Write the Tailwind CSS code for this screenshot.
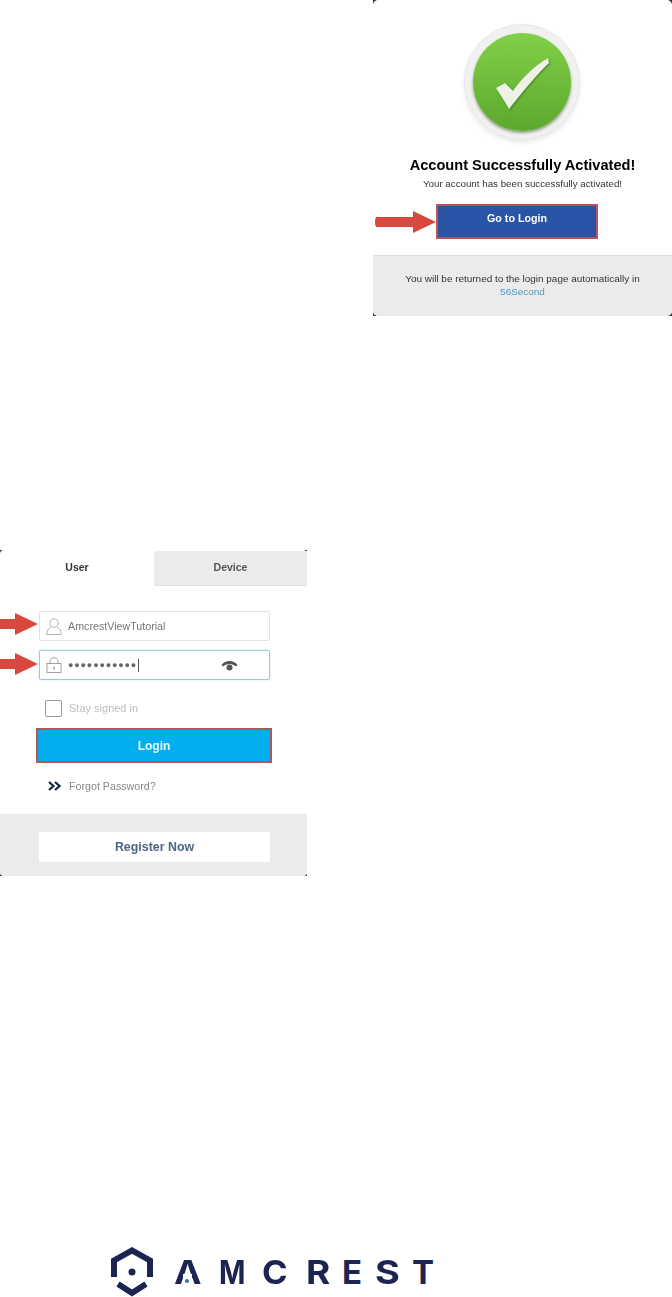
<!DOCTYPE html>
<html lang="en">

<head>
  <meta charset="UTF-8">
  <meta name="viewport" content="width=device-width, initial-scale=1.0">
  <title>Amcrest account activation</title>
  <script src="https://cdn.jsdelivr.net/npm/@tailwindcss/browser@4"></script>
</head>

<body class="bg-white">
  <div class="w-[672px] h-[1297px] overflow-hidden flex flex-col font-['Liberation_Sans',Arial,sans-serif]">

    <!-- activated card -->
    <div class="self-end w-[299px] h-[316px] bg-[#17324a] relative blur-[0.4px]">
      <div class="h-full bg-white rounded-[5px] flex flex-col items-center">
        <!-- check badge -->
        <div class="mt-[24px] -ml-[1px] w-[116px] h-[116px] rounded-full bg-[#f1f2f0] border border-[#e6e7ee] shadow-[0_3px_5px_rgba(0,0,0,0.08)] flex items-center justify-center">
          <div class="w-[98px] h-[98px] rounded-full bg-gradient-to-b from-[#82d048] to-[#5ba82e] shadow-[0_2px_3px_rgba(40,70,20,0.5)] flex items-center justify-center">
            <svg class="mt-[3px] ml-[1px] drop-shadow-[1px_1px_1px_rgba(40,80,20,0.5)]" width="54" height="52" viewBox="0 0 54 52">
              <path d="M0 30 L9 25 L17 33 C26 20 38 8 52 0 L53 5 C42 15 28 32 13 51 L9 44 Z" fill="#eef2e6" />
            </svg>
          </div>
        </div>
        <h1 class="mt-[16px] text-[14.6px] leading-[18px] font-bold text-black">Account Successfully Activated!</h1>
        <p class="mt-[4px] text-[9.75px] leading-[12px] text-[#333]">Your account has been successfully activated!</p>
        <button class="mt-[14px] -ml-[11px] w-[162px] h-[35px] border-2 border-[#b5535f] bg-[#2a55a6] pb-[6px] text-[10.7px] font-bold text-white">Go to Login</button>
        <div class="mt-[16px] w-full flex-1 bg-[#ebebeb] border-t border-[#dcdcdc] rounded-b-[5px] pt-[16px] text-center text-[9.95px] leading-[13px] text-[#333]">
          <p>You will be returned to the login page automatically in</p>
          <p class="text-[#4a9cc9]">56Second</p>
        </div>
      </div>
      <!-- red arrow -->
      <svg class="absolute left-[1px] top-[210px]" width="63" height="24" viewBox="0 0 63 24">
        <path d="M2 7 H39 V1 L62 12 L39 23 V17 H2 Q0 12 2 7 Z" fill="#d8483f" />
      </svg>
    </div>

    <!-- login card -->
    <div class="mt-[234px] w-[307px] h-[326px] bg-[#17324a] relative blur-[0.5px]">
      <div class="h-full bg-white rounded-[4px] flex flex-col">
        <div class="flex h-[36px] pt-[1px]">
          <div class="w-[154px] flex items-center justify-center text-[10.5px] font-bold text-[#333] pb-[1px]">User</div>
          <div class="flex-1 bg-[#ebebeb] border-b border-[#e0e0e0] flex items-center justify-center text-[10.5px] font-bold text-[#555]">Device</div>
        </div>

        <div class="flex-1 flex flex-col pl-[39px] pt-[25px]">
          <div class="w-[231px] h-[30px] border border-[#e3e3e3] rounded-[2px] flex items-center pl-[6px] gap-[6px]">
            <svg width="16" height="17" viewBox="0 0 16 17" fill="none" stroke="#aaa" stroke-width="0.9">
              <circle cx="8" cy="5" r="4.2" />
              <path d="M5 9 C2 10.5 1 13 0.8 16.5 H15.2 C15 13 14 10.5 11 9" />
            </svg>
            <span class="text-[10.7px] text-[#777]">AmcrestViewTutorial</span>
          </div>
          <div class="mt-[9px] w-[231px] h-[30px] border border-[#8fd0da] rounded-[2px] flex items-center pl-[6px] gap-[6px] shadow-[0_0_2px_rgba(120,200,215,0.5)]">
            <svg width="16" height="16" viewBox="0 0 16 16" fill="none" stroke="#999" stroke-width="0.9">
              <rect x="1" y="6.5" width="14" height="9" />
              <path d="M4 6.5 V4 C4 2 6 0.7 8 0.7 C10 0.7 12 2 12 4 V6.5" />
              <path d="M8 10 V12.5" stroke-width="1.5" />
            </svg>
            <span class="text-[9px] tracking-[0.85px] text-[#666] border-r border-[#555] pr-[1px] leading-[13px]">●●●●●●●●●●●</span>
            <svg class="ml-[76px]" width="17" height="11" viewBox="0 0 17 11">
              <path d="M0.5 5 C4 -0.5 13 -0.5 16.5 5 L15 6.5 C12 3 5 3 2 6.5 Z" fill="#555" />
              <circle cx="8.5" cy="7.5" r="3" fill="#555" />
            </svg>
          </div>

          <div class="mt-[20px] ml-[6px] flex items-center gap-[7px]">
            <div class="w-[17px] h-[17px] border border-[#9a9a9a] rounded-[2px]"></div>
            <span class="text-[11px] text-[#bdbdbd]">Stay signed in</span>
          </div>

          <button class="mt-[11px] -ml-[3px] w-[236px] h-[35px] border-2 border-[#b5535f] bg-[#03aeef] text-[12px] font-bold text-[#e8f8ff]">Login</button>

          <div class="mt-[15px] ml-[9px] flex items-center gap-[8px]">
            <svg width="13" height="10" viewBox="0 0 13 10" fill="none" stroke="#14263f" stroke-width="2.2">
              <path d="M1 1 L5.5 5 L1 9" />
              <path d="M7 1 L11.5 5 L7 9" />
            </svg>
            <span class="text-[10.7px] text-[#888]">Forgot Password?</span>
          </div>
        </div>

        <div class="h-[62px] bg-[#ebebeb] rounded-b-[4px] pt-[18px] pl-[39px]">
          <div class="w-[231px] h-[30px] bg-white flex items-center justify-center pt-[1px] text-[12.4px] font-bold text-[#4a6585]">Register Now</div>
        </div>
      </div>
      <!-- red arrows -->
      <svg class="absolute left-0 top-[62px]" width="39" height="24" viewBox="0 0 39 24">
        <path d="M0 7 H15 V1 L38 12 L15 23 V17 H0 Z" fill="#d8483f" />
      </svg>
      <svg class="absolute left-0 top-[102px]" width="39" height="24" viewBox="0 0 39 24">
        <path d="M0 7 H15 V1 L38 12 L15 23 V17 H0 Z" fill="#d8483f" />
      </svg>
    </div>

    <!-- logo -->
    <div class="mt-[371px] ml-[111px] h-[50px] flex items-center gap-[21px] text-[#1c2452]">
      <svg width="42" height="50" viewBox="0 0 42 50" fill="none" stroke="#1c2452" stroke-width="6">
        <path d="M3 30 V13.5 L21 3.5 L39 13.5 V30" />
        <path d="M7 37 L21 46 L35 37" />
        <circle cx="21" cy="25" r="3.5" fill="#1c2452" stroke="none" />
      </svg>
      <div class="relative flex font-['Inter',sans-serif] font-bold text-[33px] leading-[50px] -mt-[1px]">
        <span class="w-[45px] origin-left scale-x-[1.12]">A</span><span class="w-[43px] origin-left scale-x-[0.86]">M</span><span class="w-[44px] origin-left scale-x-[1.05]">C</span><span class="w-[36px] origin-left scale-x-[1.12]">R</span><span class="w-[33px]">E</span><span class="w-[37px] origin-left scale-x-[1.15]">S</span><span>T</span>
        <span class="absolute left-[9px] top-[27px] w-[9px] h-[7px] bg-white"></span>
        <span class="absolute left-[11px] top-[32px] w-[4px] h-[4px] rounded-full bg-[#2a6fc0]"></span>
      </div>
    </div>
  </div>
</body>

</html>
